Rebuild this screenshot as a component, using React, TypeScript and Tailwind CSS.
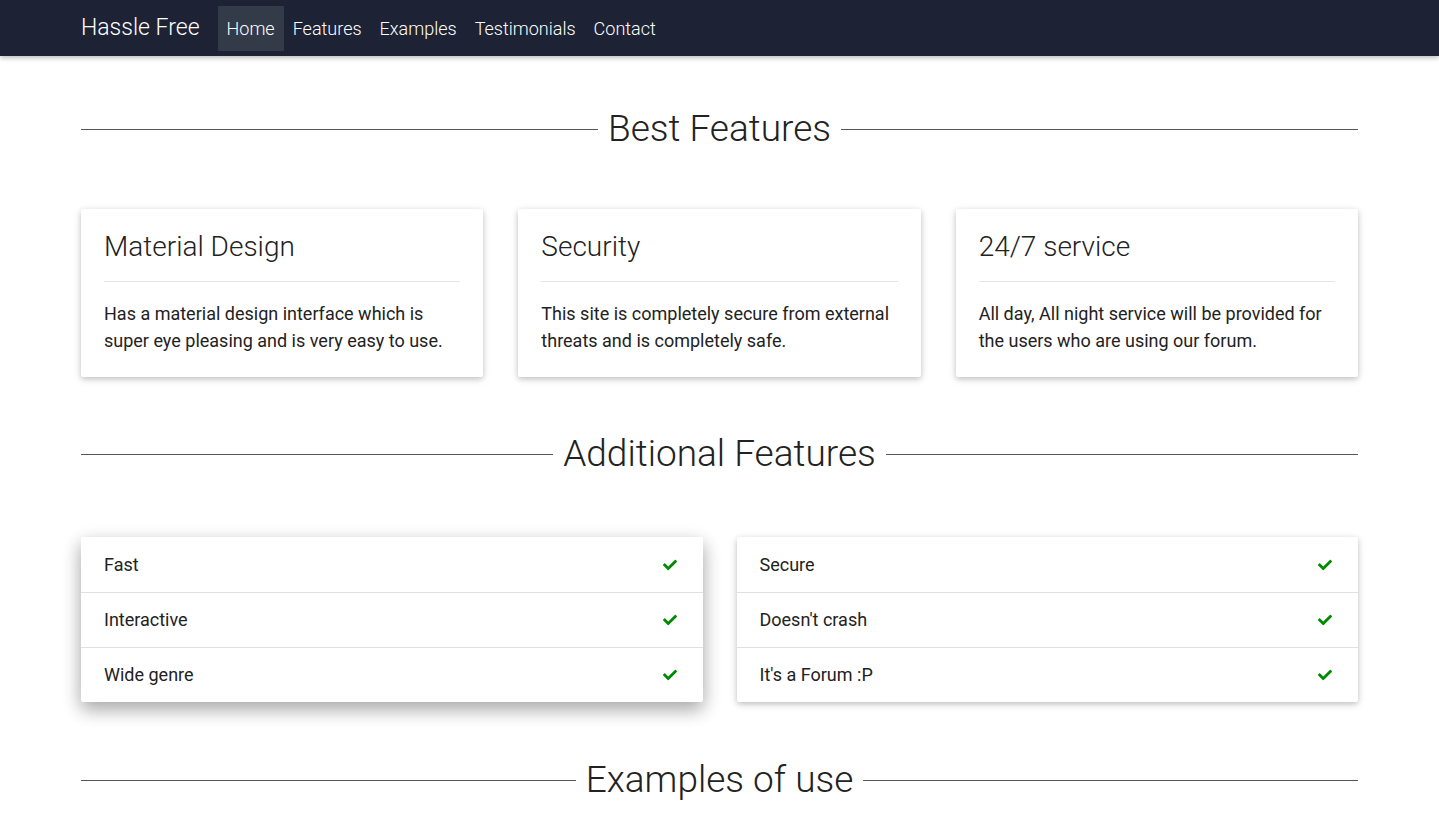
import React from "react";
import { FaCheck } from "react-icons/fa";

const font = { fontFamily: "Roboto, 'Liberation Sans', sans-serif" };

function Heading({ text, className = "" }: { text: string; className?: string }) {
  return (
    <div className={`flex items-center gap-[10px] ${className}`}>
      <div className="h-px flex-1 bg-[#555]" />
      <h2 className="text-[37px] font-light leading-[46px] text-[#222]">{text}</h2>
      <div className="h-px flex-1 bg-[#555]" />
    </div>
  );
}

function Card({ title, body }: { title: string; body: string }) {
  return (
    <div className="bg-white rounded-[2px] px-[23px] pt-[21px] pb-[23px] shadow-[0_2px_5px_rgba(0,0,0,0.16),0_2px_10px_rgba(0,0,0,0.12)]">
      <h3 className="text-[28px] font-light leading-[34px] text-[#222]">{title}</h3>
      <div className="h-px bg-[#e5e5e5] mt-[17px] mb-[18px]" />
      <p className="text-[18px] leading-[27px] text-[#222]">{body}</p>
    </div>
  );
}

function List({ items, raised }: { items: string[]; raised?: boolean }) {
  return (
    <div
      className={`bg-white rounded-[2px] ${
        raised
          ? "shadow-[0_8px_17px_rgba(0,0,0,0.2),0_6px_20px_rgba(0,0,0,0.19)]"
          : "shadow-[0_2px_5px_rgba(0,0,0,0.16),0_2px_10px_rgba(0,0,0,0.12)]"
      }`}
    >
      {items.map((it, i) => (
        <div
          key={it}
          className={`flex items-center justify-between h-[55px] pl-[23px] pr-[25px] text-[18px] text-[#222] ${
            i > 0 ? "border-t border-[#e0e0e0]" : ""
          }`}
        >
          <span className="-mt-px">{it}</span>
          <FaCheck className="text-[#008a00] w-[16px] h-[14px]" />
        </div>
      ))}
    </div>
  );
}

export default function App() {
  return (
    <div style={font} className="min-h-screen bg-white">
      <nav className="h-[56px] bg-[#1d2234] shadow-[0_2px_5px_rgba(0,0,0,0.26)]">
        <div className="mx-[81px] flex items-center h-full">
          <span className="text-[23px] font-light text-white mr-[18px] leading-[56px]">Hassle Free</span>
          <ul className="flex items-center text-[18px] font-light text-white">
            <li className="bg-[#333a48] px-[9px] h-[45px] flex items-center">Home</li>
            <li className="px-[9px] h-[45px] flex items-center">Features</li>
            <li className="px-[9px] h-[45px] flex items-center">Examples</li>
            <li className="px-[9px] h-[45px] flex items-center">Testimonials</li>
            <li className="px-[9px] h-[45px] flex items-center">Contact</li>
          </ul>
        </div>
      </nav>
      <main className="mx-[81px]">
        <Heading text="Best Features" className="mt-[50px]" />
        <div className="grid grid-cols-3 gap-[35px] mt-[57px]">
          <Card
            title="Material Design"
            body="Has a material design interface which is super eye pleasing and is very easy to use."
          />
          <Card
            title="Security"
            body="This site is completely secure from external threats and is completely safe."
          />
          <Card
            title="24/7 service"
            body="All day, All night service will be provided for the users who are using our forum."
          />
        </div>
        <Heading text="Additional Features" className="mt-[54px]" />
        <div className="grid grid-cols-2 gap-[34px] mt-[60px]">
          <List items={["Fast", "Interactive", "Wide genre"]} raised />
          <List items={["Secure", "Doesn't crash", "It's a Forum :P"]} />
        </div>
        <Heading text="Examples of use" className="mt-[55px]" />
        <div className="h-[60px]" />
      </main>
    </div>
  );
}
